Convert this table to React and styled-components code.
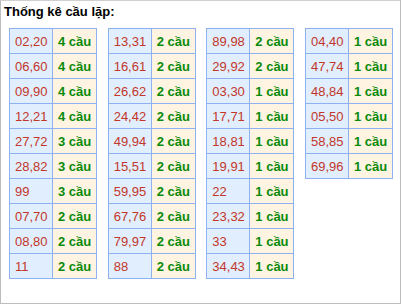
import React from 'react';
import styled, { createGlobalStyle } from 'styled-components';

const GlobalStyle = createGlobalStyle`
  html, body {
    margin: 0;
    padding: 0;
    background: #fff;
  }
  body {
    font-family: "Liberation Sans", Arial, sans-serif;
  }
`;

const Box = styled.div`
  width: 401px;
  height: 304px;
  box-sizing: border-box;
  border: 1px solid #bdbdbd;
  border-top-color: #d0d0d0;
`;

const Title = styled.div`
  font-size: 13px;
  font-weight: 700;
  color: #000;
  line-height: 15px;
  padding: 3px 0 0 3px;
  height: 24px;
  box-sizing: border-box;
`;

const Tables = styled.div`
  display: flex;
  justify-content: space-between;
  align-items: flex-start;
  padding: 3px 7px 0 8px;
`;

const Table = styled.table`
  border-collapse: collapse;
  width: 88px;
  font-size: 13px;
`;

const Num = styled.td`
  width: 43px;
  height: 25px;
  padding: 0 0 0 5px;
  box-sizing: border-box;
  border: 1px solid #8fb1f2;
  background: #e1eefe;
  color: #c2372a;
  white-space: nowrap;
`;

const Count = styled.td`
  height: 25px;
  padding: 0 0 0 5px;
  box-sizing: border-box;
  border: 1px solid #8fb1f2;
  background: #fff4e2;
  color: #0a8a0a;
  font-weight: 700;
  white-space: nowrap;
`;

const columns = [
  [
    ['02,20', 4], ['06,60', 4], ['09,90', 4], ['12,21', 4], ['27,72', 3],
    ['28,82', 3], ['99', 3], ['07,70', 2], ['08,80', 2], ['11', 2],
  ],
  [
    ['13,31', 2], ['16,61', 2], ['26,62', 2], ['24,42', 2], ['49,94', 2],
    ['15,51', 2], ['59,95', 2], ['67,76', 2], ['79,97', 2], ['88', 2],
  ],
  [
    ['89,98', 2], ['29,92', 2], ['03,30', 1], ['17,71', 1], ['18,81', 1],
    ['19,91', 1], ['22', 1], ['23,32', 1], ['33', 1], ['34,43', 1],
  ],
  [
    ['04,40', 1], ['47,74', 1], ['48,84', 1], ['05,50', 1], ['58,85', 1],
    ['69,96', 1],
  ],
];

export default function App() {
  return (
    <>
      <GlobalStyle />
      <Box>
        <Title>Thống kê cầu lặp:</Title>
        <Tables>
          {columns.map((rows, i) => (
            <Table key={i}>
              <tbody>
                {rows.map(([pair, n]) => (
                  <tr key={pair}>
                    <Num>{pair}</Num>
                    <Count>{n} cầu</Count>
                  </tr>
                ))}
              </tbody>
            </Table>
          ))}
        </Tables>
      </Box>
    </>
  );
}
